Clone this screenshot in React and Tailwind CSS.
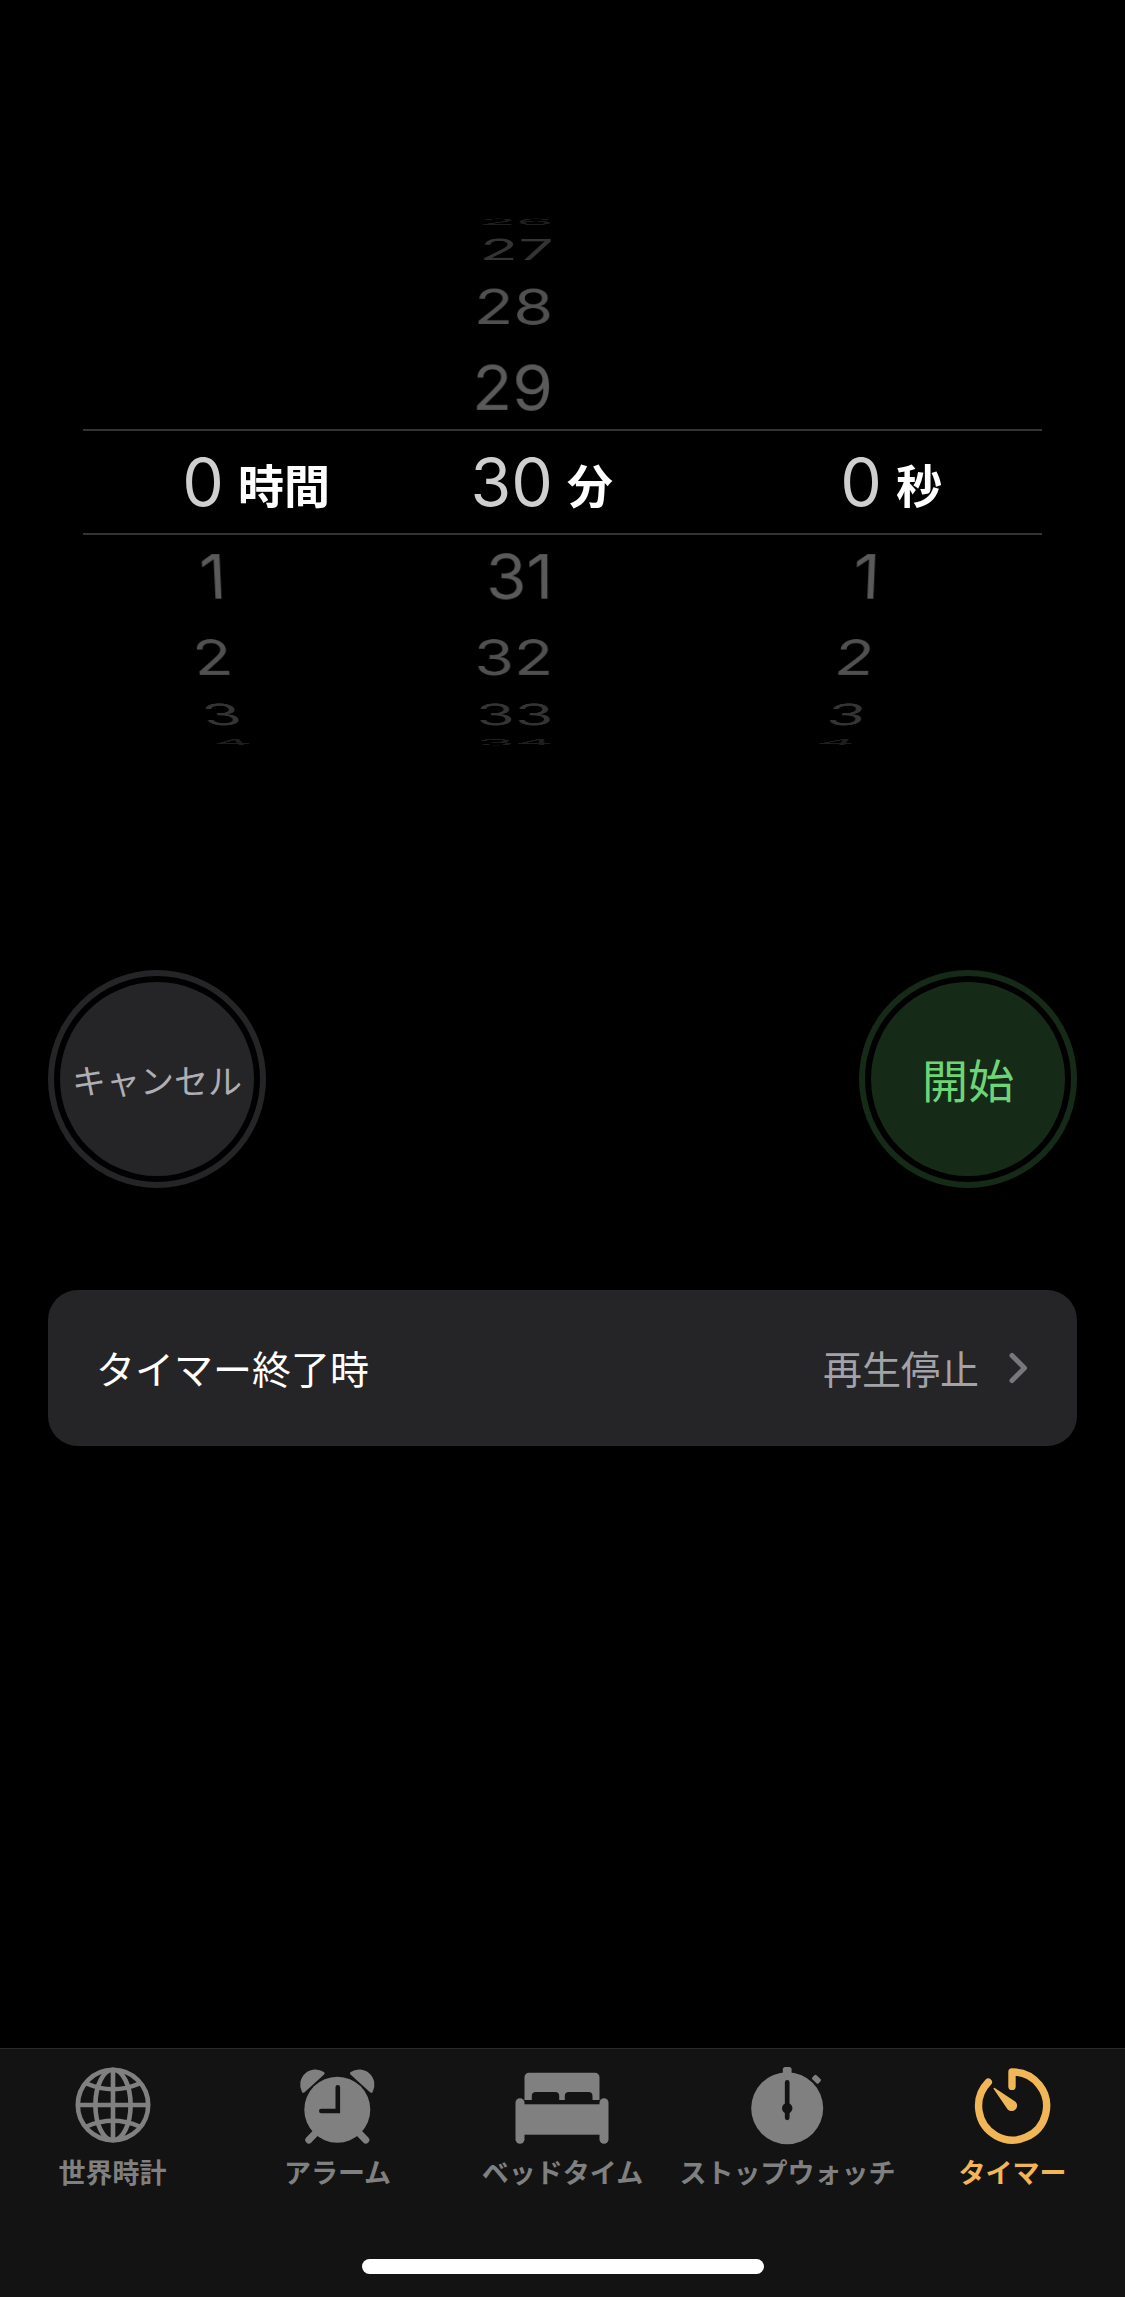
import { useState } from "react";

const ROW_ANGLE = 19;
const WHEEL_RADIUS = 292;

// text colour by distance from the selected row
const rowColors = [
    "text-[#cfcfcf]",
    "text-[#5a5a5a]",
    "text-[#505050]",
    "text-[#343434]",
    "text-[#1e1e1e]",
];

const GlobeIcon = () => (
    <svg viewBox="0 0 96 80" className="w-24 h-20" fill="none" stroke="currentColor" strokeWidth="4.6" aria-hidden="true">
        <circle cx="48" cy="39" r="35.2" />
        <ellipse cx="48" cy="39" rx="17.6" ry="35.2" />
        <path d="M48 4V74M13 39H83" />
        <path d="M21.5 17.5Q48 29 74.5 17.5M21.5 60.5Q48 49 74.5 60.5" />
    </svg>
);

const AlarmIcon = () => (
    <svg viewBox="0 0 96 80" className="w-24 h-20" fill="currentColor" aria-hidden="true">
        <circle cx="47.3" cy="43.7" r="33" />
        <path d="M33.1 7.3A13.8 13.8 0 0 0 13.3 25.3Z" stroke="currentColor" strokeWidth="3" strokeLinejoin="round" />
        <path d="M61.5 7.3A13.8 13.8 0 0 1 81.3 25.3Z" stroke="currentColor" strokeWidth="3" strokeLinejoin="round" />
        <path d="M27.5 65L18.8 74M67.1 65L75.8 74" stroke="currentColor" strokeWidth="7" strokeLinecap="round" />
        <path d="M47.8 21.3V45H31.3" fill="none" stroke="#131313" strokeWidth="4.6" strokeLinecap="round" />
    </svg>
);

const BedIcon = () => (
    <svg viewBox="0 0 96 80" className="w-24 h-20" fill="currentColor" aria-hidden="true">
        <path d="M9.5 34V11.2A4.5 4.5 0 0 1 14 6.7H80A4.5 4.5 0 0 1 84.5 11.2V34H77.5V30A4 4 0 0 0 73.5 26H53.8A4 4 0 0 0 49.8 30V34H44.2V30A4 4 0 0 0 40.2 26H20.8A4 4 0 0 0 16.8 30V34Z" />
        <rect x="5" y="38.3" width="84" height="30.4" />
        <rect x="0.5" y="32.3" width="9" height="45.4" rx="4.5" />
        <rect x="84.5" y="32.3" width="9" height="45.4" rx="4.5" />
    </svg>
);

const StopwatchIcon = () => (
    <svg viewBox="0 0 96 80" className="w-24 h-20" fill="currentColor" aria-hidden="true">
        <circle cx="47.2" cy="42.2" r="36" />
        <rect x="42.8" y="1" width="8.8" height="10" rx="2.5" />
        <rect x="72.2" y="10.4" width="8.6" height="5.8" rx="1.6" transform="rotate(43 76.5 13.3)" />
        <path d="M47.2 16.4V51.8" stroke="#131313" strokeWidth="4.7" strokeLinecap="round" />
        <circle cx="47.2" cy="42.2" r="5.2" fill="#131313" />
    </svg>
);

const TimerIcon = () => (
    <svg viewBox="0 0 96 80" className="w-24 h-20" fill="none" aria-hidden="true">
        <path d="M47 20.4V6A34 34 0 1 1 23.3 16.2" stroke="currentColor" strokeWidth="7.4" strokeLinecap="round" strokeLinejoin="round" />
        <path d="M29.8 22L50.5 35.7A5.5 5.5 0 1 1 42.7 43.5L28.7 23.1A.8 .8 0 0 1 29.8 22Z" fill="currentColor" />
    </svg>
);

const tabs = [
    { id: "world", label: "世界時計", Icon: GlobeIcon },
    { id: "alarm", label: "アラーム", Icon: AlarmIcon },
    { id: "bedtime", label: "ベッドタイム", Icon: BedIcon },
    { id: "stopwatch", label: "ストップウォッチ", Icon: StopwatchIcon },
    { id: "timer", label: "タイマー", Icon: TimerIcon },
];

function Wheel({ unit, value, max, onChange }) {
    const rows = [];
    for (let i = Math.max(0, value - 4); i <= Math.min(max, value + 4); i++) {
        rows.push(i);
    }

    return (
        <div className="flex items-center transform-3d">
            <ul
                role="listbox"
                aria-label={unit}
                className="grid w-[155px] transform-3d"
                style={{ transform: `translateZ(-${WHEEL_RADIUS}px)` }}
            >
                {rows.map((n) => (
                    <li
                        key={n}
                        role="option"
                        aria-selected={n === value}
                        onClick={() => onChange(n)}
                        className={`col-start-1 row-start-1 text-right text-[66px] leading-[80px] cursor-pointer ${rowColors[Math.abs(n - value)]}`}
                        style={{ transform: `rotateX(${(value - n) * ROW_ANGLE}deg) translateZ(${WHEEL_RADIUS}px)` }}
                    >
                        {n}
                    </li>
                ))}
            </ul>
            <span className="ml-3.5 pt-2 text-[46px] leading-[72px] font-bold text-white">{unit}</span>
        </div>
    );
}

export default function App() {
    const [hours, setHours] = useState(0);
    const [minutes, setMinutes] = useState(30);
    const [seconds, setSeconds] = useState(0);
    const [activeTab, setActiveTab] = useState("timer");

    const handleCancel = () => {
        setHours(0);
        setMinutes(30);
        setSeconds(0);
    };

    return (
        <div lang="ja" className="flex min-h-screen flex-col bg-black font-[Inter,'Noto_Sans_CJK_JP',sans-serif]">
            <main className="flex-1 px-12 pt-[158px]">
                <div className="-mx-12 grid h-[648px] items-center overflow-hidden">
                    <div className="col-start-1 row-start-1 mx-[83px] h-[106px] border-y-2 border-[#333333]" />
                    <div className="col-start-1 row-start-1 grid grid-cols-3 px-[69px] perspective-[2500px]">
                        <Wheel unit="時間" value={hours} max={23} onChange={setHours} />
                        <Wheel unit="分" value={minutes} max={59} onChange={setMinutes} />
                        <Wheel unit="秒" value={seconds} max={59} onChange={setSeconds} />
                    </div>
                </div>

                <div className="mt-[164px] flex justify-between">
                    <button
                        type="button"
                        onClick={handleCancel}
                        className="size-[218px] rounded-full border-6 border-[#252527] p-1.5 text-[34px] text-[#aeaeb4]"
                    >
                        <span className="flex size-full items-center justify-center rounded-full bg-[#252527] pt-1">キャンセル</span>
                    </button>
                    <button
                        type="button"
                        className="size-[218px] rounded-full border-6 border-[#152b18] p-1.5 text-[46px] text-[#6dd577]"
                    >
                        <span className="flex size-full items-center justify-center rounded-full bg-[#152b18] pt-1">開始</span>
                    </button>
                </div>

                <button
                    type="button"
                    className="mt-[102px] flex h-[156px] w-full items-center rounded-[30px] bg-[#252527] px-12 text-[39px]"
                >
                    <span className="pt-1 text-white">タイマー終了時</span>
                    <span className="ml-auto pt-1 text-[#a2a2a8]">再生停止</span>
                    <svg viewBox="0 0 20 32" className="ml-[30px] h-8 w-5 text-[#77777c]" fill="none" stroke="currentColor" strokeWidth="5" strokeLinecap="round" strokeLinejoin="round" aria-hidden="true">
                        <path d="M3 3.5L15.5 16L3 28.5" />
                    </svg>
                </button>
            </main>

            <nav className="border-t border-[#2b2b2b] bg-[#131313] pt-[17px] pb-[23px]">
                <div className="grid grid-cols-5">
                    {tabs.map(({ id, label, Icon }) => (
                        <a
                            key={id}
                            href={`#${id}`}
                            onClick={() => setActiveTab(id)}
                            className={`flex flex-col items-center gap-2 ${activeTab === id ? "text-[#f1b656]" : "text-[#808080]"}`}
                        >
                            <Icon />
                            <span className="text-[27px] leading-10 font-bold whitespace-nowrap">{label}</span>
                        </a>
                    ))}
                </div>
                <div className="mx-auto mt-[65px] h-[15px] w-[402px] rounded-full bg-white" />
            </nav>
        </div>
    );
}
